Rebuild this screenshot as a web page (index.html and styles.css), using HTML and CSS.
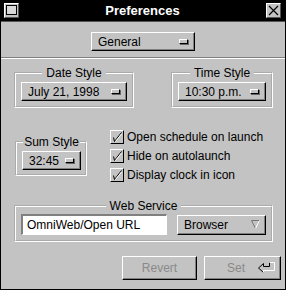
FILE: index.html
```html
<!DOCTYPE html>
<html lang="en">
<head>
  <meta charset="UTF-8">
  <meta name="viewport" content="width=device-width, initial-scale=1.0">
  <title>Preferences</title>
  <link rel="stylesheet" href="styles.css">
</head>
<body>
  <div class="window">

    <div class="titlebar">
      <span class="title-button miniaturize"><span class="mini-box"></span></span>
      <span class="title">Preferences</span>
      <span class="title-button close">
        <svg width="13" height="13" viewBox="0 0 13 13">
          <path d="M2 2 L11 11 M11 2 L2 11" stroke="#000" stroke-width="1.2" fill="none"/>
        </svg>
      </span>
    </div>

    <div class="top">
      <div class="popup popup-general">General <span class="popup-mark"></span></div>
    </div>
    <div class="separator"></div>

    <div class="row row-styles">
      <fieldset class="group group-date">
        <legend>Date Style</legend>
        <div class="popup">July 21, 1998 <span class="popup-mark"></span></div>
      </fieldset>
      <fieldset class="group group-time">
        <legend>Time Style</legend>
        <div class="popup">10:30 p.m. <span class="popup-mark"></span></div>
      </fieldset>
    </div>

    <div class="row row-options">
      <fieldset class="group group-sum">
        <legend>Sum Style</legend>
        <div class="popup">32:45 <span class="popup-mark"></span></div>
      </fieldset>
      <div class="switches">
        <label class="switch"><span class="check"><svg width="12" height="12" viewBox="0 0 12 12"><polyline points="2.5,6.5 3.5,10.5 10.5,1.5" stroke="#000" fill="none"/><polyline points="4.5,10.5 10.5,3" stroke="#fff" fill="none"/></svg></span>Open schedule on launch</label>
        <label class="switch"><span class="check"><svg width="12" height="12" viewBox="0 0 12 12"><polyline points="2.5,6.5 3.5,10.5 10.5,1.5" stroke="#000" fill="none"/><polyline points="4.5,10.5 10.5,3" stroke="#fff" fill="none"/></svg></span>Hide on autolaunch</label>
        <label class="switch"><span class="check"><svg width="12" height="12" viewBox="0 0 12 12"><polyline points="2.5,6.5 3.5,10.5 10.5,1.5" stroke="#000" fill="none"/><polyline points="4.5,10.5 10.5,3" stroke="#fff" fill="none"/></svg></span>Display clock in icon</label>
      </div>
    </div>

    <fieldset class="group group-web">
      <legend>Web Service</legend>
      <div class="web-row">
        <div class="textfield">OmniWeb/Open URL</div>
        <div class="popup pulldown">Browser
          <svg width="9" height="9" viewBox="0 0 9 9">
            <polyline points="0.5,0.5 8.5,0.5" stroke="#777" fill="none"/>
            <polyline points="0.5,0.5 4.5,8.5" stroke="#777" fill="none"/>
            <polyline points="8.5,0.5 4.5,8.5" stroke="#fff" fill="none"/>
          </svg>
        </div>
      </div>
    </fieldset>

    <div class="actions">
      <button class="button" disabled>Revert</button>
      <button class="button button-set" disabled>
        <span class="set-label">Set</span>
        <svg class="return-key" width="18" height="12" viewBox="0 0 18 12">
          <polyline points="5.5,10.5 0.5,6 5.5,1.5 5.5,4.5 11.5,4.5 11.5,0.5" stroke="#000" fill="none"/>
          <polyline points="11.5,0.5 16.5,0.5 16.5,8.5 5.5,8.5 5.5,10.5" stroke="#fff" fill="none"/>
        </svg>
      </button>
    </div>

  </div>
</body>
</html>
```

FILE: styles.css
```css
/* Window */
body {
  font-family: "Liberation Sans", Arial, sans-serif;
  font-size: 12px;
  background-color: #c3c3c3;
  margin: 0;
  padding: 0;
}
.window {
  width: 286px;
  height: 290px;
  box-sizing: border-box;
  border-left: 1px solid #000;
  border-right: 1px solid #000;
  border-bottom: 1px solid #000;
  background-color: #c3c3c3;
  display: flex;
  flex-direction: column;
}

/* Title bar */
.titlebar {
  height: 22px;
  flex-shrink: 0;
  box-sizing: border-box;
  display: flex;
  align-items: center;
  padding: 0 4px 1px 3px;
  background-color: #000;
  border-bottom: 1px solid #555;
}
.title {
  flex: 1;
  text-align: center;
  color: #fff;
  font-weight: bold;
  font-size: 13px;
}
.title-button {
  width: 15px;
  height: 15px;
  box-sizing: border-box;
  display: flex;
  align-items: center;
  justify-content: center;
  background-color: #c3c3c3;
  border-top: 1px solid #fff;
  border-left: 1px solid #fff;
  border-right: 1px solid #555;
  border-bottom: 1px solid #555;
}
.mini-box {
  width: 9px;
  height: 8px;
  border: 1px solid #000;
  background-color: #d8d8d8;
}

/* Pop-up buttons */
.top {
  display: flex;
  justify-content: center;
  padding: 10px 0 6px;
}
.popup {
  height: 19px;
  box-sizing: border-box;
  display: flex;
  align-items: center;
  justify-content: space-between;
  padding: 0 4px 0 6px;
  background-color: #c3c3c3;
  border-top: 1px solid #fff;
  border-left: 1px solid #fff;
  border-right: 1px solid #000;
  border-bottom: 1px solid #000;
  box-shadow: inset -1px -1px 0 #808080;
  white-space: nowrap;
}
.popup-mark {
  width: 9px;
  height: 5px;
  box-sizing: border-box;
  background-color: #c3c3c3;
  border-top: 1px solid #fff;
  border-left: 1px solid #fff;
  border-right: 1px solid #000;
  border-bottom: 1px solid #000;
  box-shadow: 1px 1px 0 #666;
  margin-right: 2px;
}
.popup-general {
  width: 104px;
}
.separator {
  border-top: 1px solid #808080;
  border-bottom: 1px solid #fff;
}

/* Group boxes */
.group {
  margin: 0;
  min-inline-size: 0;
  border: 2px groove #fff;
  padding: 2px 5px 5px;
}
.group legend {
  margin: 0 auto;
  padding: 0 4px;
  line-height: 14px;
  white-space: nowrap;
}
.row {
  display: flex;
}
.row-styles {
  justify-content: space-between;
  margin-top: 7px;
  padding: 0 12px 0 13px;
}
.group-date {
  width: 120px;
  box-sizing: border-box;
}
.group-time {
  width: 102px;
  box-sizing: border-box;
}
.row-options {
  margin-top: 19px;
  padding-left: 14px;
}
.group-sum {
  width: 72px;
  box-sizing: border-box;
  align-self: flex-start;
  margin-top: 8px;
  padding: 2px 4px 4px 5px;
}
.group-sum legend {
  padding: 0 1px;
}

/* Switches */
.switches {
  margin-left: 23px;
  display: flex;
  flex-direction: column;
}
.switch {
  height: 19px;
  display: flex;
  align-items: center;
}
.check {
  width: 14px;
  height: 14px;
  box-sizing: border-box;
  display: flex;
  align-items: center;
  justify-content: center;
  margin-right: 3px;
  background-color: #c3c3c3;
  border-top: 1px solid #fff;
  border-left: 1px solid #fff;
  border-right: 1px solid #000;
  border-bottom: 1px solid #000;
}

/* Web service */
.group-web {
  margin: 15px 0 0 13px;
  width: 259px;
  box-sizing: border-box;
  padding: 1px 5px 5px;
}
.web-row {
  display: flex;
  align-items: center;
  justify-content: space-between;
}
.textfield {
  width: 146px;
  height: 21px;
  box-sizing: border-box;
  padding: 2px 0 0 4px;
  background-color: #fff;
  border-top: 2px solid #808080;
  border-left: 2px solid #808080;
  border-right: 1px solid #fff;
  border-bottom: 1px solid #fff;
  line-height: 15px;
}
.pulldown {
  width: 89px;
  height: 20px;
  padding-right: 5px;
}

/* Bottom buttons */
.actions {
  display: flex;
  justify-content: flex-end;
  gap: 7px;
  margin-top: 14px;
  padding-right: 4px;
}
.button {
  height: 24px;
  box-sizing: border-box;
  font-family: "Liberation Sans", Arial, sans-serif;
  font-size: 12px;
  color: #8a8a8a;
  background-color: #c3c3c3;
  border-top: 1px solid #fff;
  border-left: 1px solid #fff;
  border-right: 1px solid #000;
  border-bottom: 1px solid #000;
  box-shadow: inset -1px -1px 0 #808080;
  padding: 0;
  width: 75px;
}
.button-set {
  width: 77px;
  display: flex;
  align-items: center;
  padding: 0 4px 0 22px;
}
.set-label {
  flex: 1;
  text-align: left;
}
.return-key {
  flex-shrink: 0;
}
```
